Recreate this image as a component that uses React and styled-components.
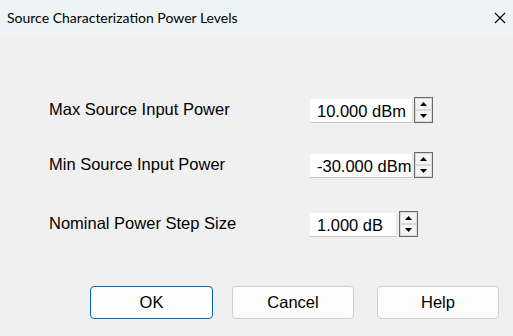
import React from "react";
import styled, { createGlobalStyle } from "styled-components";

const Global = createGlobalStyle`
  html, body { margin: 0; padding: 0; background: #f0f0f0; }
  body { width: 513px; height: 336px; overflow: hidden; }
`;

const Dialog = styled.div`
  width: 513px;
  height: 336px;
  display: flex;
  flex-direction: column;
  background: #f0f0f0;
  font-family: "Liberation Sans", Arial, sans-serif;
  color: #000;
`;

const TitleBar = styled.div`
  height: 36px;
  flex: none;
  display: flex;
  align-items: center;
  justify-content: space-between;
  padding: 0 6px 0 7px;
  background: #eef3f6;
`;

const Title = styled.div`
  font-family: Lato, "Noto Sans", sans-serif;
  font-size: 14px;
  color: #000;
  padding-bottom: 1px;
`;

const Close = styled.button`
  border: none;
  background: transparent;
  padding: 0;
  width: 12px;
  height: 12px;
  margin-right: 1px;
  display: flex;
`;

const Body = styled.div`
  display: flex;
  flex-direction: column;
  padding: 61px 0 0 49px;
`;

const Row = styled.div`
  display: flex;
  align-items: center;
  height: 26px;
  margin-bottom: ${(p) => p.$gap}px;
`;

const Label = styled.div`
  width: 261px;
  font-size: 16.5px;
  line-height: 19px;
  margin-top: ${(p) => p.$dy || 0}px;
`;

const Field = styled.div`
  width: ${(p) => p.$w}px;
  height: 24px;
  box-sizing: border-box;
  background: #fff;
  border-bottom: 1px solid #c8c8c8;
  border-right: 1px solid #e2e2e2;
  font-size: 16.5px;
  line-height: 24px;
  padding-left: 7px;
  white-space: nowrap;
  overflow: hidden;
  margin-top: ${(p) => p.$dy || 0}px;
`;

const Spin = styled.div`
  margin-left: ${(p) => p.$ml}px;
  width: 19px;
  height: 26px;
  box-sizing: border-box;
  border: 1px solid #6a6a6a;
  display: flex;
  flex-direction: column;
  background: #f0f0f0;
`;

const SpinBtn = styled.div`
  flex: 1;
  display: flex;
  align-items: center;
  justify-content: center;
  border: 1px solid #dadada;
  background: #f4f4f4;
`;

const Buttons = styled.div`
  display: flex;
  padding: 49px 0 0 90px;
  gap: 19px;
`;

const Btn = styled.button`
  width: ${(p) => p.$w}px;
  height: 33px;
  box-sizing: border-box;
  border-radius: 4px;
  background: #fdfdfd;
  border: 1px solid ${(p) => (p.$primary ? "#0067c0" : "#d0d0d0")};
  font-family: "Liberation Sans", Arial, sans-serif;
  font-size: 16.5px;
  color: #000;
  padding: 0;
  margin-left: ${(p) => p.$ml || 0}px;
`;

const Up = () => (
  <svg width="7" height="4" viewBox="0 0 7 4">
    <polygon points="3.5,0 7,4 0,4" fill="#000" />
  </svg>
);
const Down = () => (
  <svg width="7" height="4" viewBox="0 0 7 4">
    <polygon points="0,0 7,0 3.5,4" fill="#000" />
  </svg>
);

const Spinner = ({ ml }) => (
  <Spin $ml={ml}>
    <SpinBtn>
      <Up />
    </SpinBtn>
    <SpinBtn>
      <Down />
    </SpinBtn>
  </Spin>
);

export default function App() {
  return (
    <Dialog>
      <Global />
      <TitleBar>
        <Title>Source Characterization Power Levels</Title>
        <Close aria-label="Close">
          <svg width="12" height="12" viewBox="0 0 12 12">
            <path d="M1 1 L11 11 M11 1 L1 11" stroke="#000" strokeWidth="1.1" />
          </svg>
        </Close>
      </TitleBar>
      <Body>
        <Row $gap={29}>
          <Label $dy={-2}>Max Source Input Power</Label>
          <Field $w={103} $dy={1}>10.000 dBm</Field>
          <Spinner ml={1} />
        </Row>
        <Row $gap={33}>
          <Label $dy={-2}>Min Source Input Power</Label>
          <Field $w={103} $dy={1}>-30.000 dBm</Field>
          <Spinner ml={1} />
        </Row>
        <Row $gap={0}>
          <Label $dy={-2}>Nominal Power Step Size</Label>
          <Field $w={87} $dy={1}>1.000 dB</Field>
          <Spinner ml={2} />
        </Row>
      </Body>
      <Buttons>
        <Btn $primary $w={123}>OK</Btn>
        <Btn $w={122}>Cancel</Btn>
        <Btn $w={122} $ml={4}>Help</Btn>
      </Buttons>
    </Dialog>
  );
}
